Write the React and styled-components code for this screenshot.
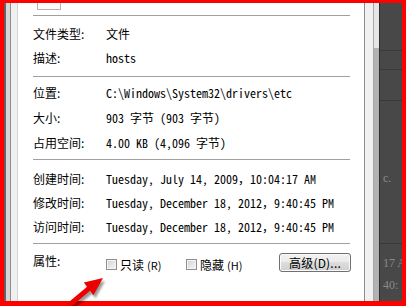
import React from 'react';
import styled, { createGlobalStyle } from 'styled-components';

const Global = createGlobalStyle`
  html, body { margin: 0; padding: 0; background: #fff; }
  body { width: 406px; height: 306px; overflow: hidden; }
`;

const Screen = styled.div`
  position: relative;
  width: 406px;
  height: 306px;
  display: flex;
  overflow: hidden;
  font-family: "Noto Sans CJK SC", sans-serif;
  font-size: 12px;
  color: #000;
`;

const Strip = styled.div`
  flex: none;
  width: ${p => p.$w}px;
  background: ${p => p.$bg};
`;

const Panel = styled.div`
  flex: none;
  width: 346px;
  box-sizing: border-box;
  padding: 0 14px 0 15px;
  background: #fff;
  display: flex;
  flex-direction: column;
`;

const TopRow = styled.div`
  height: 15px;
  display: flex;
  align-items: flex-start;
`;

const IconFrame = styled.div`
  margin-left: 4px;
  width: 22px;
  height: 9px;
  border: 1px solid #b4b4b4;
  border-top: none;
  background: #fdfdfd;
`;

const Rule = styled.div`
  height: 1px;
  background: #a0a0a0;
`;

const Section = styled.div`
  padding: ${p => p.$pt}px 0 ${p => p.$pb}px;
  display: flex;
  flex-direction: column;
`;

const Row = styled.div`
  display: grid;
  grid-template-columns: 73px 1fr;
  align-items: center;
  height: ${p => p.$h}px;
`;

const Label = styled.div`
  font-family: "Noto Sans CJK SC", sans-serif;
  font-size: 12px;
  line-height: 14px;
  white-space: nowrap;
`;

const Value = styled.div`
  font-family: "Noto Sans Mono CJK SC", "Liberation Mono", monospace;
  font-size: 12px;
  line-height: 14px;
  white-space: pre;
`;

const AttrRow = styled.div`
  display: flex;
  align-items: center;
  height: 19px;
`;

const AttrLabel = styled(Label)`
  width: 73px;
  flex: none;
  margin-top: -3px;
`;

const CheckItem = styled.label`
  display: flex;
  align-items: center;
  gap: 3px;
  width: ${p => p.$w}px;
  flex: none;
  margin-top: 4px;
  font-size: 12px;
  line-height: 14px;
  white-space: nowrap;
`;

const Box = styled.span`
  width: 9px;
  height: 9px;
  border: 1px solid #8e8f8f;
  background: linear-gradient(135deg, #d2d2d2 0%, #e6e6e6 55%, #f6f6f6 100%);
  box-shadow: inset 0 0 0 1px #f4f4f4;
`;

const Mnemonic = styled.span`
  font-size: 11px;
`;

const Spacer = styled.div`
  flex: 1;
`;

const Button = styled.button`
  flex: none;
  width: 72px;
  height: 19px;
  margin-right: -1px;
  padding: 0;
  border: 1px solid #707070;
  border-radius: 3px;
  background: linear-gradient(#f2f2f2 0%, #ebebeb 45%, #dddddd 50%, #cfcfcf 100%);
  box-shadow: inset 0 0 0 1px #fafafa;
  font-family: "Noto Sans CJK SC", sans-serif;
  font-size: 12px;
  line-height: 14px;
  color: #000;
  letter-spacing: 0.2px;
`;

const Edge = styled.div`
  flex: none;
  width: 1px;
  background: ${p => p.$c};
`;

const Track = styled.div`
  flex: none;
  width: 5px;
  display: flex;
  flex-direction: column;
`;

const TrackTop = styled.div`
  height: 48px;
  background: #e6e6e6;
`;

const Thumb = styled.div`
  flex: 1;
  background: #b2b2b2;
`;

const Backdrop = styled.div`
  flex: none;
  width: 26px;
  background: #484848;
  display: flex;
  flex-direction: column;
`;

const BgRow = styled.div`
  height: ${p => p.$h}px;
  border-bottom: 1px solid #3a3a3a;
  box-sizing: border-box;
  padding: ${p => p.$pt || 0}px 0 0 3px;
  color: #8a8a8a;
  font-family: "Liberation Serif", serif;
  font-size: 12px;
  line-height: 22px;
  white-space: nowrap;
  overflow: hidden;
`;

const RedFrame = styled.div`
  position: absolute;
  inset: 0;
  border-style: solid;
  border-color: #ff0000;
  border-width: 3px 4px 5px 4px;
  pointer-events: none;
`;

const ArrowSvg = styled.svg`
  position: absolute;
  left: 60px;
  top: 270px;
  pointer-events: none;
`;

const ARROW = '6.5,34 27.1,16.8 23.8,12.4 43,8 33.4,25.2 30.1,20.8 9.5,38';

export default function App() {
  return (
    <>
      <Global />
      <Screen>
        <Strip $w={6} $bg="linear-gradient(90deg,#3e3e3e,#6a6a6a)" />
        <Strip $w={4} $bg="#d6d6d6" />
        <Strip $w={1} $bg="#8c8c8c" />
        <Strip $w={6} $bg="#f0f0f0" />
        <Strip $w={1} $bg="#d4d4d4" />

        <Panel>
          <TopRow>
            <IconFrame />
          </TopRow>
          <Rule />
          <Section $pt={6} $pb={6}>
            <Row $h={24}><Label>文件类型:</Label><Value>文件</Value></Row>
            <Row $h={24}><Label>描述:</Label><Value>hosts</Value></Row>
          </Section>
          <Rule />
          <Section $pt={3} $pb={4}>
            <Row $h={25}><Label>位置:</Label><Value>{'C:\\Windows\\System32\\drivers\\etc'}</Value></Row>
            <Row $h={25}><Label>大小:</Label><Value>903 字节 (903 字节)</Value></Row>
            <Row $h={25}><Label>占用空间:</Label><Value>4.00 KB (4,096 字节)</Value></Row>
          </Section>
          <Rule />
          <Section $pt={7} $pb={4}>
            <Row $h={24}><Label>创建时间:</Label><Value>Tuesday, July 14, 2009，10:04:17 AM</Value></Row>
            <Row $h={24}><Label>修改时间:</Label><Value>Tuesday, December 18, 2012，9:40:45 PM</Value></Row>
            <Row $h={24}><Label>访问时间:</Label><Value>Tuesday, December 18, 2012，9:40:45 PM</Value></Row>
          </Section>
          <Rule />
          <Section $pt={9} $pb={0}>
            <AttrRow>
              <AttrLabel>属性:</AttrLabel>
              <CheckItem $w={80}><Box />只读<Mnemonic>(R)</Mnemonic></CheckItem>
              <CheckItem $w={70}><Box />隐藏<Mnemonic>(H)</Mnemonic></CheckItem>
              <Spacer />
              <Button>高级(D)...</Button>
            </AttrRow>
          </Section>
        </Panel>

        <Edge $c="#8e8e8e" />
        <Strip $w={8} $bg="#f0f0f0" />
        <Edge $c="#a6a6a6" />
        <Track>
          <TrackTop />
          <Thumb />
        </Track>
        <Edge $c="#2e2e2e" />
        <Backdrop>
          <BgRow $h={51} />
          <BgRow $h={19} />
          <BgRow $h={31} />
          <BgRow $h={143} $pt={66}>c.</BgRow>
          <BgRow $h={62} $pt={8}>17 A<br />40:</BgRow>
        </Backdrop>

        <RedFrame />
        <ArrowSvg width="50" height="36" viewBox="0 0 50 36">
          <defs>
            <filter id="sh" x="-20%" y="-20%" width="140%" height="140%">
              <feGaussianBlur stdDeviation="1.2" />
            </filter>
          </defs>
          <polygon points={ARROW} transform="translate(2,3)" fill="rgba(0,0,0,0.4)" filter="url(#sh)" />
          <polygon points={ARROW} fill="#ee0000" />
        </ArrowSvg>
      </Screen>
    </>
  );
}
